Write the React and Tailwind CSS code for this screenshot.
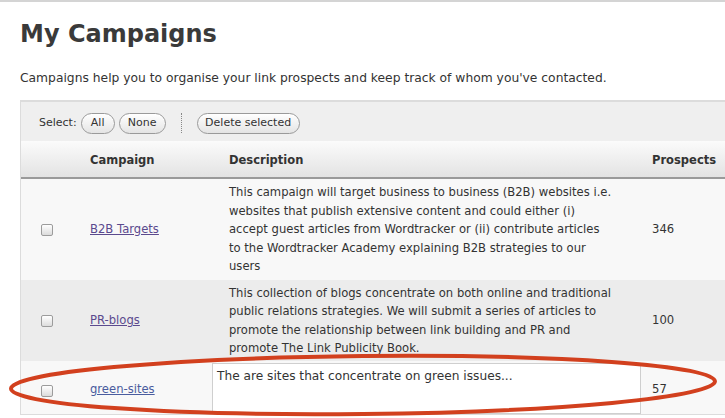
import React from "react";

const font = { fontFamily: '"DejaVu Sans", Verdana, sans-serif' };

function Pill({ children, className = "" }) {
  return (
    <span
      className={`inline-flex h-[21px] items-center justify-center rounded-full border border-[#9a9a9a] bg-gradient-to-b from-white to-[#e4e4e4] text-[11px] text-[#333] shadow-[inset_0_1px_0_#fff] ${className}`}
    >
      {children}
    </span>
  );
}

function Check() {
  return (
    <span className="inline-block h-[12px] w-[12px] rounded-[2px] border border-[#9c9c9c] bg-gradient-to-b from-white to-[#dcdcdc]" />
  );
}

const rows = [
  {
    name: "B2B Targets",
    color: "text-[#5b4a8e] decoration-[#5b4a8e]",
    lines: [
      "This campaign will target business to business (B2B) websites i.e.",
      "websites that publish extensive content and could either (i)",
      "accept guest articles from Wordtracker or (ii) contribute articles",
      "to the Wordtracker Academy explaining B2B strategies to our",
      "users",
    ],
    n: "346",
    h: "h-[101px]",
    bg: "bg-[#f8f8f8]",
  },
  {
    name: "PR-blogs",
    color: "text-[#5b4a8e] decoration-[#5b4a8e]",
    lines: [
      "This collection of blogs concentrate on both online and traditional",
      "public relations strategies. We will submit a series of articles to",
      "promote the relationship between link building and PR and",
      "promote The Link Publicity Book.",
    ],
    n: "100",
    h: "h-[81px]",
    bg: "bg-[#ececec]",
  },
];

export default function App() {
  return (
    <div
      className="relative h-[418px] w-[725px] overflow-hidden border-t-2 border-[#d4d4d4] bg-white text-[#333]"
      style={font}
    >
      <h1 className="ml-[20px] mt-[15px] text-[24px] font-bold leading-[34px] text-[#3a3a3a]">
        My Campaigns
      </h1>
      <p className="ml-[20px] mt-[19px] text-[12.3px] leading-[16px] text-[#333]">
        Campaigns help you to organise your link prospects and keep track of whom you've contacted.
      </p>
      <div className="ml-[20px] mt-[14px] w-[720px] border-l border-t-2 border-[#dcdcdc]">
        {/* toolbar */}
        <div className="flex h-[39px] items-center bg-[#efefef] pl-[18px] pt-[3px] text-[11px]">
          <span className="mr-[4px]">Select:</span>
          <Pill className="w-[34px]">All</Pill>
          <Pill className="ml-[4px] w-[47px]">None</Pill>
          <span className="mx-[15px] h-[20px] border-l border-dotted border-[#888]" />
          <Pill className="w-[103px]">Delete selected</Pill>
        </div>
        {/* header */}
        <div className="flex h-[38px] items-center border-b-2 border-[#9a9a9a] bg-gradient-to-b from-[#fbfbfb] to-[#e3e3e3] pt-[4px] text-[11.5px] font-bold">
          <div className="w-[52px]" />
          <div className="w-[139px] pl-[17px]">Campaign</div>
          <div className="w-[429px] pl-[17px]">Description</div>
          <div className="pl-[11px]">Prospects</div>
        </div>
        {rows.map((r) => (
          <div key={r.name} className={`flex items-center ${r.h} ${r.bg} text-[11.6px]`}>
            <div className="flex w-[52px] justify-end pr-[20px]">
              <Check />
            </div>
            <div className="w-[139px] pl-[17px]">
              <span className={`underline ${r.color}`}>{r.name}</span>
            </div>
            <div className="w-[429px] pl-[17px] leading-[18.5px]">
              {r.lines.map((l) => (
                <div key={l}>{l}</div>
              ))}
            </div>
            <div className="pl-[11px]">{r.n}</div>
          </div>
        ))}
        <div className="flex h-[54px] items-center border-b border-[#dcdcdc] bg-[#f8f8f8] text-[11.6px]">
          <div className="flex w-[52px] justify-end pr-[20px] pt-[6px]">
            <Check />
          </div>
          <div className="w-[139px] pl-[17px] pt-[5px]">
            <span className="text-[#4a5c9e] underline decoration-[#4a5c9e]">green-sites</span>
          </div>
          <div className="h-[51px] w-[429px] self-end border border-[#cfcfcf] bg-white px-[4px] pt-[3px] text-[12.2px] leading-[18px]">
            The are sites that concentrate on green issues...
          </div>
          <div className="pl-[11px] pt-[5px]">57</div>
        </div>
      </div>
      <svg
        className="pointer-events-none absolute left-0 top-0"
        width="725"
        height="418"
        viewBox="0 0 725 418"
      >
        <ellipse
          cx="363"
          cy="383"
          rx="352"
          ry="29"
          transform="rotate(-0.6 363 383)"
          fill="none"
          stroke="#d2401e"
          strokeWidth="4"
        />
      </svg>
    </div>
  );
}
